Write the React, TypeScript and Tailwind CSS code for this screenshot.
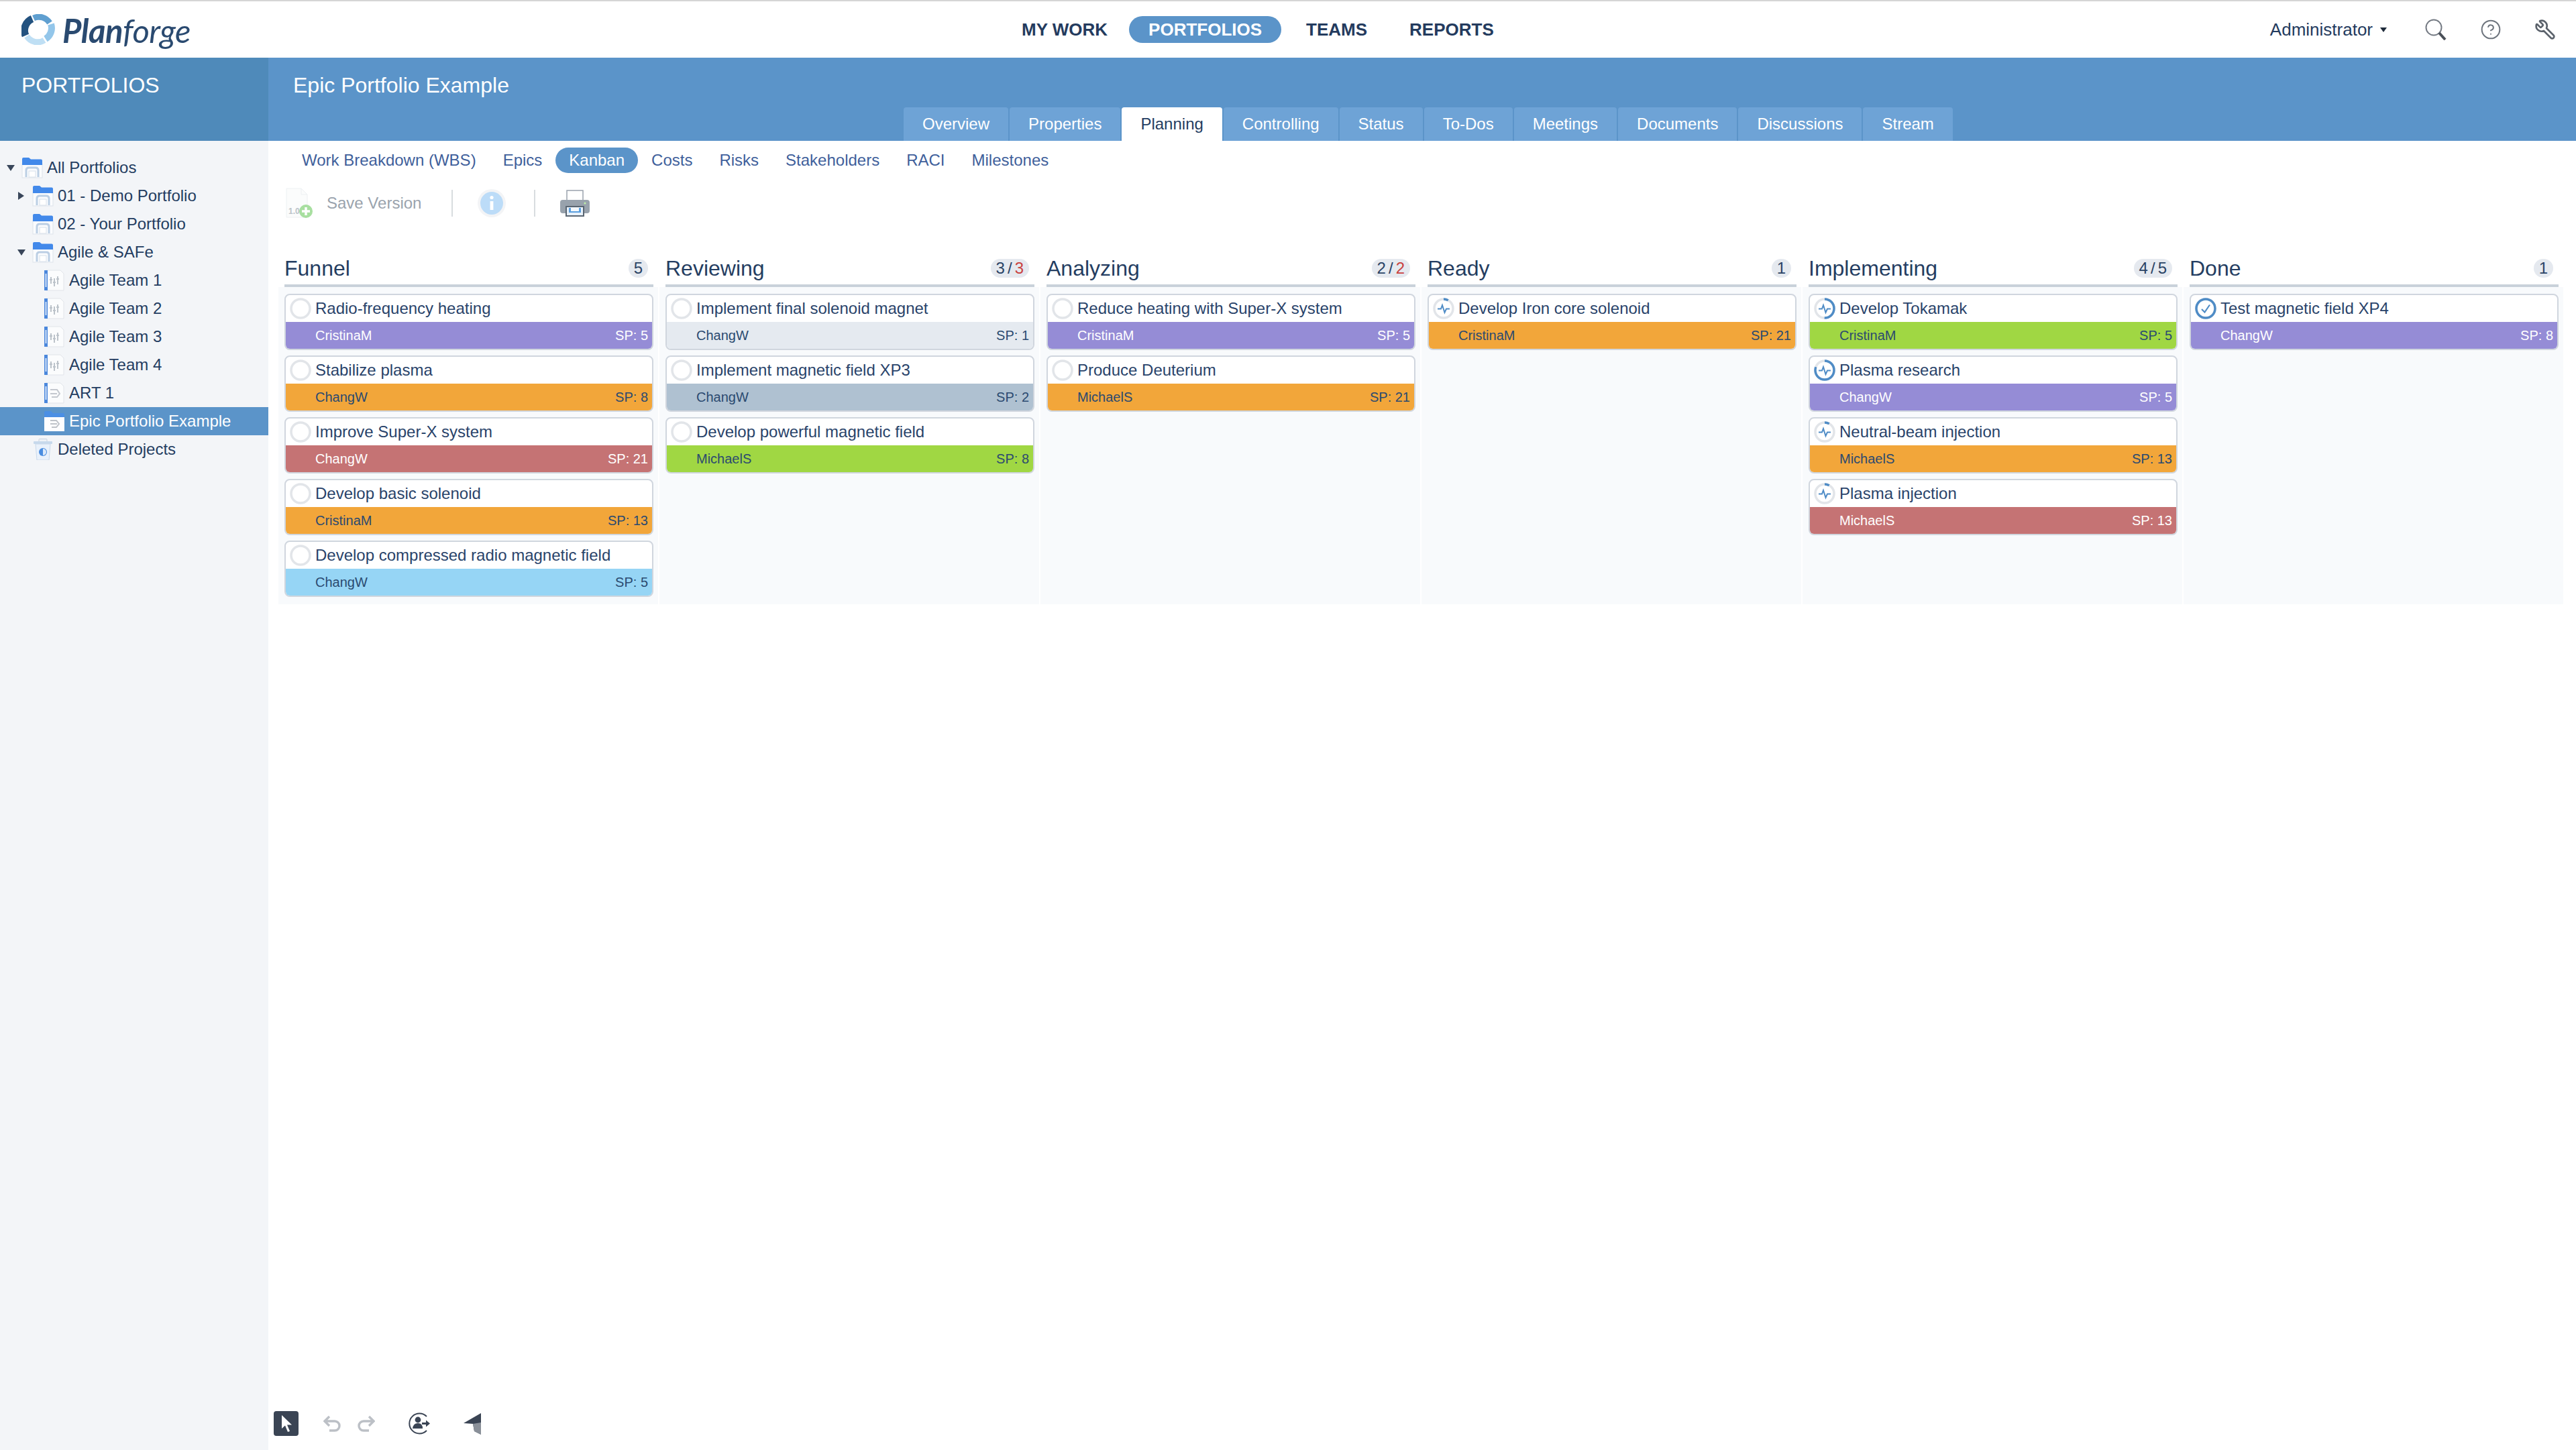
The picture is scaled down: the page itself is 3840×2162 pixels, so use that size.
import { CircleHelp, Wrench } from 'lucide-react';

type Card = { title: string; user: string; sp: number; color: string; light?: boolean; state?: 'open' | 'start' | 'half' | 'most' | 'done' };
type Column = { name: string; count: string; limit?: string; cards: Card[] };

const PURPLE = 'bg-[#958cd6]';
const ORANGE = 'bg-[#f2a63a]';
const RED = 'bg-[#c57374]';
const SKY = 'bg-[#96d5f5]';
const GREEN = 'bg-[#a0d743]';
const PALE = 'bg-[#e5eaf0]';
const STEEL = 'bg-[#afc1d1]';

const columns: Column[] = [
  {
    name: 'Funnel',
    count: '5',
    cards: [
      { title: 'Radio-frequency heating', user: 'CristinaM', sp: 5, color: PURPLE, light: true },
      { title: 'Stabilize plasma', user: 'ChangW', sp: 8, color: ORANGE },
      { title: 'Improve Super-X system', user: 'ChangW', sp: 21, color: RED, light: true },
      { title: 'Develop basic solenoid', user: 'CristinaM', sp: 13, color: ORANGE },
      { title: 'Develop compressed radio magnetic field', user: 'ChangW', sp: 5, color: SKY },
    ],
  },
  {
    name: 'Reviewing',
    count: '3',
    limit: '3',
    cards: [
      { title: 'Implement final solenoid magnet', user: 'ChangW', sp: 1, color: PALE },
      { title: 'Implement magnetic field XP3', user: 'ChangW', sp: 2, color: STEEL },
      { title: 'Develop powerful magnetic field', user: 'MichaelS', sp: 8, color: GREEN },
    ],
  },
  {
    name: 'Analyzing',
    count: '2',
    limit: '2',
    cards: [
      { title: 'Reduce heating with Super-X system', user: 'CristinaM', sp: 5, color: PURPLE, light: true },
      { title: 'Produce Deuterium', user: 'MichaelS', sp: 21, color: ORANGE },
    ],
  },
  {
    name: 'Ready',
    count: '1',
    cards: [{ title: 'Develop Iron core solenoid', user: 'CristinaM', sp: 21, color: ORANGE, state: 'start' }],
  },
  {
    name: 'Implementing',
    count: '4',
    limit: '5',
    cards: [
      { title: 'Develop Tokamak', user: 'CristinaM', sp: 5, color: GREEN, state: 'half' },
      { title: 'Plasma research', user: 'ChangW', sp: 5, color: PURPLE, light: true, state: 'most' },
      { title: 'Neutral-beam injection', user: 'MichaelS', sp: 13, color: ORANGE, state: 'start' },
      { title: 'Plasma injection', user: 'MichaelS', sp: 13, color: RED, light: true, state: 'start' },
    ],
  },
  {
    name: 'Done',
    count: '1',
    cards: [{ title: 'Test magnetic field XP4', user: 'ChangW', sp: 8, color: PURPLE, light: true, state: 'done' }],
  },
];

const tabs = ['Overview', 'Properties', 'Planning', 'Controlling', 'Status', 'To-Dos', 'Meetings', 'Documents', 'Discussions', 'Stream'];
const subTabs = ['Work Breakdown (WBS)', 'Epics', 'Kanban', 'Costs', 'Risks', 'Stakeholders', 'RACI', 'Milestones'];

const Logo = () => (
  <div className="flex items-center pl-[32px] w-[400px]">
    <svg width="50" height="46" viewBox="0 0 50 46" className="shrink-0">
      <path d="M6 32 A19 19 0 0 1 16 7" fill="none" stroke="#23527f" strokeWidth="11" />
      <path d="M18 6 A19 19 0 0 1 42 13" fill="none" stroke="#5f9fd0" strokeWidth="9" />
      <path d="M44 15 A19 19 0 0 1 36 37" fill="none" stroke="#93c6ea" strokeWidth="10" />
      <path d="M34 39 A19 19 0 0 1 8 33" fill="none" stroke="#bfdff4" strokeWidth="9" />
    </svg>
    <span className="ml-[11px] mt-[3px] text-[49px] leading-none italic tracking-[-0.5px] text-[#2a4a70] font-['Lato',sans-serif]">
      <span className="font-bold">Plan</span>forge
    </span>
  </div>
);

const Caret = ({ open }: { open?: boolean }) => (
  <svg width="12" height="12" viewBox="0 0 12 12" className="shrink-0">
    {open ? <path d="M0 2 H12 L6 11 Z" fill="#39465a" /> : <path d="M1 0 L10 6 L1 12 Z" fill="#39465a" />}
  </svg>
);

const PortfolioIcon = () => (
  <svg width="32" height="32" viewBox="0 0 32 32" className="shrink-0">
    <rect x="1" y="10" width="30" height="21" fill="#fbfcfe" stroke="#dde3ea" />
    <path d="M1 12 V3 Q1 1 3 1 H11 L14 3.5 H29 Q31 3.5 31 5.5 V12 Z" fill="#4289ea" />
    <path d="M7 30 V20 Q7 16 11 16 H21 Q25 16 25 20 V30" fill="none" stroke="#bccfe4" strokeWidth="3" />
    <rect x="11" y="21" width="10" height="9" fill="#fff" stroke="#d6dfe9" />
  </svg>
);

const ProjectIcon = ({ art }: { art?: boolean }) => (
  <svg width="32" height="32" viewBox="0 0 32 32" className="shrink-0">
    <path d="M3 1 H25 L30 6 V31 H3 Z" fill="#fbfcfd" stroke="#e1e4e9" />
    <rect x="1" y="1" width="5" height="30" fill="#4a87dc" />
    <rect x="2.5" y="6" width="2" height="20" fill="#d8e6f8" />
    {art ? (
      <path d="M10 11 H20 L24 17 L20 22 H12 M10 17 H20" fill="none" stroke="#c4c8cf" strokeWidth="2" />
    ) : (
      <path d="M11 11 V21 M16 13 V25 M21 10 V22 M9 15 H13 M14 19 H18 M19 14 H23" fill="none" stroke="#bcc3ca" strokeWidth="2" />
    )}
  </svg>
);

const EpicIcon = () => (
  <svg width="32" height="32" viewBox="0 0 32 32" className="shrink-0">
    <path d="M1 12 V3 Q1 1 3 1 H11 L14 4 H29 Q31 4 31 6 V12 Z" fill="#4b8fe4" />
    <rect x="1" y="10" width="30" height="21" fill="#fdfdfe" />
    <path d="M10 15 H19 L23 20 L19 25 H12 M10 20 H20" fill="none" stroke="#bfc3c9" strokeWidth="2" />
  </svg>
);

const TrashIcon = () => (
  <svg width="28" height="32" viewBox="0 0 28 32" className="shrink-0">
    <rect x="8" y="0.5" width="12" height="5" rx="1" fill="#eef2f7" stroke="#c9d3de" />
    <rect x="0" y="4" width="28" height="4" rx="1" fill="#c7d9ec" />
    <path d="M3 8 H25 L23 32 H5 Z" fill="#e9f1fb" stroke="#c9d8ea" />
    <circle cx="14" cy="20" r="6" fill="#4a8de0" />
    <path d="M14 15 A5 5 0 0 1 14 25 Z" fill="#dbe9fa" />
  </svg>
);

const tree = [
  { label: 'All Portfolios', depth: 0, arrow: 'open', icon: <PortfolioIcon /> },
  { label: '01 - Demo Portfolio', depth: 1, arrow: 'closed', icon: <PortfolioIcon /> },
  { label: '02 - Your Portfolio', depth: 1, icon: <PortfolioIcon /> },
  { label: 'Agile & SAFe', depth: 1, arrow: 'open', icon: <PortfolioIcon /> },
  { label: 'Agile Team 1', depth: 2, icon: <ProjectIcon /> },
  { label: 'Agile Team 2', depth: 2, icon: <ProjectIcon /> },
  { label: 'Agile Team 3', depth: 2, icon: <ProjectIcon /> },
  { label: 'Agile Team 4', depth: 2, icon: <ProjectIcon /> },
  { label: 'ART 1', depth: 2, icon: <ProjectIcon art /> },
  { label: 'Epic Portfolio Example', depth: 2, icon: <EpicIcon />, active: true },
  { label: 'Deleted Projects', depth: 1, icon: <TrashIcon /> },
];

const depthPad = ['pl-[10px]', 'pl-[26px]', 'pl-[43px]'];

const Sidebar = () => (
  <aside className="w-[400px] shrink-0 bg-[#f3f5f8] pt-[19px] flex flex-col">
    {tree.map((row) => (
      <div
        key={row.label}
        className={`flex items-center h-[42px] text-[24px] ${depthPad[row.depth]} ${row.active ? 'bg-[#5b94c9] text-white' : 'text-[#243d61]'}`}
      >
        <span className="w-[22px] flex shrink-0">{row.arrow && <Caret open={row.arrow === 'open'} />}</span>
        <span className="w-[32px] flex justify-center shrink-0">{row.icon}</span>
        <span className="ml-[6px] whitespace-nowrap">{row.label}</span>
      </div>
    ))}
  </aside>
);

const StateIcon = ({ state }: { state?: Card['state'] }) => {
  const dash = { open: 0, start: 0.08, half: 0.5, most: 0.8, done: 1 }[state ?? 'open'];
  const c = 2 * Math.PI * 14;
  return (
    <svg width="32" height="32" viewBox="0 0 32 32" className="shrink-0">
      <circle cx="16" cy="16" r="14" fill="none" stroke="#e2e5e9" strokeWidth="3.5" />
      {dash > 0 && (
        <circle
          cx="16"
          cy="16"
          r="14"
          fill="none"
          stroke="#4f8cc6"
          strokeWidth="3.5"
          strokeDasharray={`${dash * c} ${c}`}
          transform="rotate(-90 16 16)"
        />
      )}
      {state === 'done' && <path d="M10 17 L14.5 21.5 L22 10.5" fill="none" stroke="#4f8cc6" strokeWidth="2.2" />}
      {state && state !== 'done' && state !== 'open' && (
        <path d="M7 16.5 H12 L14 11 L17.5 22 L20 16.5 H25" fill="none" stroke="#4f8cc6" strokeWidth="2" />
      )}
    </svg>
  );
};

const KanbanCard = ({ card }: { card: Card }) => (
  <div className="border-2 border-[#d0d6de] rounded-[8px] overflow-hidden bg-white text-[#29436a]">
    <div className="h-[40px] flex items-center pl-[6px]">
      <StateIcon state={card.state} />
      <span className="ml-[6px] text-[24px] whitespace-nowrap">{card.title}</span>
    </div>
    <div className={`h-[40px] flex items-center justify-between pl-[44px] pr-[6px] text-[20px] ${card.color} ${card.light ? 'text-white' : 'text-[#2b4a70]'}`}>
      <span>{card.user}</span>
      <span>SP: {card.sp}</span>
    </div>
  </div>
);

const KanbanColumn = ({ col }: { col: Column }) => (
  <div className="w-[566px] shrink-0">
    <div className="px-[9px]">
      <div className="h-[48px] flex items-center justify-between pr-[6px]">
        <h2 className="text-[32px] font-normal text-[#243d61]">{col.name}</h2>
        <span className="h-[28px] min-w-[29px] px-[8px] rounded-full bg-[#e5e9ef] flex items-center justify-center text-[24px] text-[#2a4365]">
          {col.limit ? (
            <>
              {col.count}
              <span className="mx-[4px]">/</span>
              <span className={col.count === col.limit ? 'text-[#c9413f]' : ''}>{col.limit}</span>
            </>
          ) : (
            col.count
          )}
        </span>
      </div>
      <div className="h-[4px] w-[550px] bg-[#c9d1da]" />
    </div>
    <div className="h-[473px] bg-[#f8fafc] px-[9px] pt-[10px] flex flex-col gap-[8px]">
      {col.cards.map((c) => (
        <div key={c.title} className="w-[550px]">
          <KanbanCard card={c} />
        </div>
      ))}
    </div>
  </div>
);

const Toolbar = () => (
  <div className="mt-[22px] h-[46px] pl-[25px] flex items-center text-[24px] text-[#9aa3ad]">
    <svg width="43" height="46" viewBox="0 0 43 46" className="shrink-0">
      <path d="M2 1 H24 L33 10 V44 H2 Z" fill="#fbfcfc" stroke="#edf0f2" />
      <path d="M24 1 V10 H33" fill="none" stroke="#edf0f2" />
      <text x="5" y="39" fontSize="12" fontWeight="bold" fill="#bcc3c9">1.0</text>
      <circle cx="31" cy="35" r="10" fill="#a8dfa0" />
      <path d="M31 29 V41 M25 35 H37" stroke="#fff" strokeWidth="3.5" />
    </svg>
    <span className="ml-[19px]">Save Version</span>
    <span className="ml-[45px] w-[2px] h-[40px] bg-[#d8dcdf]" />
    <svg width="44" height="44" viewBox="0 0 44 44" className="ml-[36px] shrink-0">
      <circle cx="22" cy="22" r="21" fill="#f3f4f6" />
      <circle cx="22" cy="22" r="17" fill="#bcdcf8" />
      <circle cx="22" cy="13.5" r="2.6" fill="#fff" />
      <rect x="19.6" y="19" width="4.8" height="13" fill="#fff" />
    </svg>
    <span className="ml-[41px] w-[2px] h-[40px] bg-[#d8dcdf]" />
    <svg width="46" height="40" viewBox="0 0 46 40" className="ml-[36px] shrink-0">
      <rect x="11" y="1" width="24" height="16" fill="#fff" stroke="#9aa3ad" strokeWidth="1.5" />
      <rect x="1" y="15" width="44" height="20" rx="4" fill="#98a2ac" />
      <circle cx="38" cy="20" r="1.5" fill="#bff0a8" />
      <rect x="10" y="25" width="26" height="14" fill="#e8f1fa" stroke="#5a6672" strokeWidth="2" />
      <rect x="14" y="27" width="18" height="7" fill="#5a9fdf" />
      <rect x="17" y="27" width="12" height="5" fill="#f4f8fc" />
    </svg>
  </div>
);

const BottomTools = () => (
  <div className="mt-auto mb-[21px] pl-[8px] flex items-center">
    <span className="w-[37px] h-[37px] rounded-[4px] bg-[#3a4454] flex items-center justify-center">
      <svg width="22" height="28" viewBox="0 0 22 28">
        <path d="M4 1 V21 L9 16.5 L13 26 L16 25 L12 15.5 H19 Z" fill="#fff" />
      </svg>
    </span>
    <svg width="26" height="24" viewBox="0 0 26 24" className="ml-[37px]">
      <path d="M9 1 L2 8 L9 15 M2 8 H17 A7 7 0 0 1 17 22 H9" fill="none" stroke="#bcc0c6" strokeWidth="3.4" />
    </svg>
    <svg width="26" height="24" viewBox="0 0 26 24" className="ml-[25px]">
      <path d="M17 1 L24 8 L17 15 M24 8 H9 A7 7 0 0 0 9 22 H17" fill="none" stroke="#bcc0c6" strokeWidth="3.4" />
    </svg>
    <svg width="33" height="33" viewBox="0 0 33 33" className="ml-[49px]">
      <path d="M28 6 A15 15 0 1 0 28 27" fill="none" stroke="#3a4454" strokeWidth="2" />
      <circle cx="15" cy="11" r="4.4" fill="#3a4454" />
      <path d="M7 24 Q8 16 15 16 Q22 16 22 24 Z" fill="#3a4454" />
      <path d="M21 15 H27 V11.5 L33 16.5 L27 21.5 V18 H21 Z" fill="#3a4454" />
    </svg>
    <svg width="26" height="32" viewBox="0 0 26 32" className="ml-[50px]">
      <path d="M26 0 V32 L16 27 L14 16 L0 15 Z" fill="#3a4454" />
      <path d="M26 14 V32 L16 27 L14 16 Z" fill="#8a9099" />
    </svg>
  </div>
);

export default function App() {
  return (
    <div className="h-screen flex flex-col overflow-hidden bg-white font-['Liberation_Sans',Arial,sans-serif]">
      <header className="h-[86px] shrink-0 border-t-2 border-[#d5d5d5] flex items-center relative">
        <Logo />
        <nav className="ml-[1123px] flex items-center text-[26px] font-bold text-[#243b5e]">
          <span>MY WORK</span>
          <span className="ml-[32px] h-[40px] px-[29px] rounded-full bg-[#5b94c9] text-white flex items-center">PORTFOLIOS</span>
          <span className="ml-[37px]">TEAMS</span>
          <span className="ml-[63px]">REPORTS</span>
        </nav>
        <div className="ml-auto pr-[30px] flex items-center text-[26px] text-[#243b5e]">
          <span>Administrator</span>
          <svg width="10" height="7" viewBox="0 0 10 7" className="ml-[11px]">
            <path d="M0 0 H10 L5 7 Z" fill="#1e2a3a" />
          </svg>
          <svg width="32" height="32" viewBox="0 0 32 32" className="ml-[57px]">
            <circle cx="13" cy="13" r="11.5" fill="none" stroke="#757b84" strokeWidth="2" />
            <path d="M21 21 L30 31" stroke="#4a5058" strokeWidth="4" />
          </svg>
          <CircleHelp className="ml-[50px] w-[32px] h-[32px] text-[#6d747d]" strokeWidth={1.5} />
          <Wrench className="ml-[49px] w-[32px] h-[32px] text-[#5b626b] -scale-x-100" strokeWidth={2} />
        </div>
      </header>

      <div className="h-[124px] shrink-0 flex text-white">
        <div className="w-[400px] shrink-0 bg-[#4f8aba] pl-[32px] pt-[21px] text-[32px] leading-[40px]">PORTFOLIOS</div>
        <div className="flex-1 bg-[#5b94c9] flex flex-col justify-between">
          <div className="pl-[37px] pt-[21px] text-[32px] leading-[40px]">Epic Portfolio Example</div>
          <div className="pl-[947px] flex gap-[2px] text-[24px]">
            {tabs.map((t) => (
              <div
                key={t}
                className={`h-[50px] px-[28px] rounded-t-[4px] flex items-center ${t === 'Planning' ? 'bg-white text-[#243d61]' : 'bg-[#6ea3d6] text-white'}`}
              >
                {t}
              </div>
            ))}
          </div>
        </div>
      </div>

      <div className="flex-1 flex min-h-0">
        <Sidebar />
        <main className="flex-1 min-w-0 flex flex-col">
          <div className="pt-[10px] pl-[30px] flex text-[24px] text-[#3f5f9b]">
            {subTabs.map((t) => (
              <span key={t} className={`h-[38px] px-[20px] rounded-full flex items-center ${t === 'Kanban' ? 'bg-[#5b94c9] text-white' : ''}`}>
                {t}
              </span>
            ))}
          </div>
          <Toolbar />
          <div className="mt-[50px] pl-[15px] flex gap-[2px]">
            {columns.map((c) => (
              <KanbanColumn key={c.name} col={c} />
            ))}
          </div>
          <BottomTools />
        </main>
      </div>
    </div>
  );
}
